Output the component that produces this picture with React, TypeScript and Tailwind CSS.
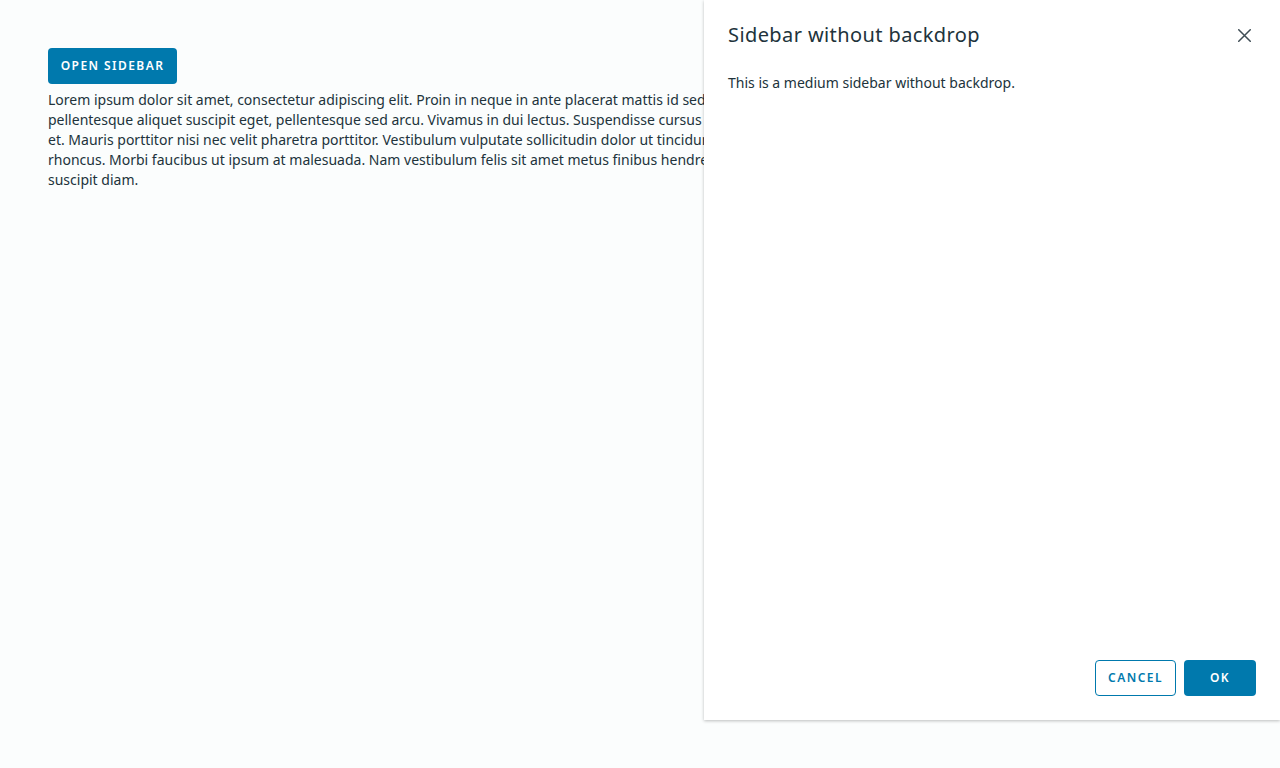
import React from "react";

const lines = [
  "Lorem ipsum dolor sit amet, consectetur adipiscing elit. Proin in neque in ante placerat mattis id sed quam. Proin rhoncus lacus et tempor dignissim. Vivamus sem quam,",
  "pellentesque aliquet suscipit eget, pellentesque sed arcu. Vivamus in dui lectus. Suspendisse cursus est ac nisl imperdiet viverra. Aenean sagittis nibh lacus, in eleifend urna ultrices",
  "et. Mauris porttitor nisi nec velit pharetra porttitor. Vestibulum vulputate sollicitudin dolor ut tincidunt. Phasellus vitae blandit felis. Nullam posuere ipsum tincidunt velit pellentesque",
  "rhoncus. Morbi faucibus ut ipsum at malesuada. Nam vestibulum felis sit amet metus finibus hendrerit. Fusce faucibus odio eget ex vulputate rhoncus. Fusce nec aliquam leo, at",
  "suscipit diam.",
];

export default function App() {
  return (
    <div
      className="relative w-[1280px] h-[768px] overflow-hidden bg-[#fbfdfd] text-[#21333b]"
      style={{ fontFamily: "'Noto Sans', Lato, sans-serif" }}
    >
      <div className="px-12 pt-12">
        <button className="h-9 w-[129px] rounded bg-[#0079ad] text-white text-[12px] font-semibold tracking-[0.12em] uppercase">
          Open Sidebar
        </button>
        <div className="mt-[6px] text-[14px] leading-5">
          {lines.map((l, i) => (
            <div key={i} className="whitespace-nowrap">
              {l}
            </div>
          ))}
        </div>
      </div>

      <div className="absolute top-0 right-0 w-[576px] h-[720px] bg-white shadow-[0_1px_3px_rgba(0,0,0,0.25)] flex flex-col p-6">
        <div className="flex items-start justify-between">
          <h2 className="text-[20px] leading-6 text-[#21333b] mt-[-1px] tracking-[0.02em]">Sidebar without backdrop</h2>
          <button className="w-6 h-6 flex items-center justify-center mr-0 mt-[-1px]">
            <svg width="13" height="13" viewBox="0 0 13 13">
              <path d="M0.75 0.75 L12.25 12.25 M12.25 0.75 L0.75 12.25" stroke="#3f4d55" strokeWidth="1.5" strokeLinecap="round" />
            </svg>
          </button>
        </div>
        <p className="mt-[26px] text-[14px] leading-5">This is a medium sidebar without backdrop.</p>
        <div className="flex-1" />
        <div className="flex justify-end gap-2">
          <button className="h-9 w-[81px] rounded border border-[#0079ad] text-[#0079ad] text-[12px] font-semibold tracking-[0.12em] uppercase">
            Cancel
          </button>
          <button className="h-9 w-[72px] rounded bg-[#0079ad] text-white text-[12px] font-semibold tracking-[0.12em] uppercase">
            Ok
          </button>
        </div>
      </div>
    </div>
  );
}
